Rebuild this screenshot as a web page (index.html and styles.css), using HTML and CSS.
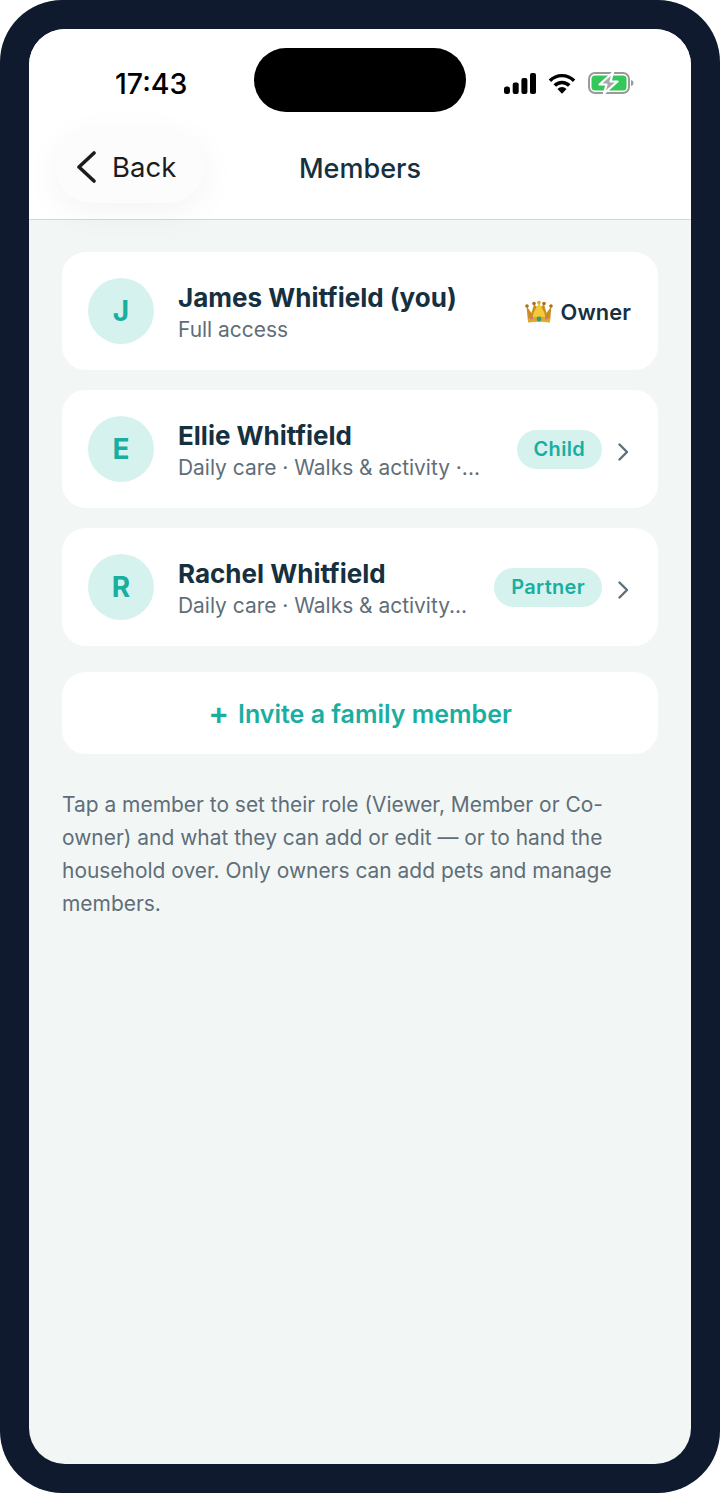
FILE: index.html
```html
<!DOCTYPE html>
<html lang="en">
<head>
    <meta charset="UTF-8">
    <meta name="viewport" content="width=device-width, initial-scale=1.0">
    <title>Members</title>
    <link rel="stylesheet" href="styles.css">
</head>
<body>
    <div class="phone">
        <div class="screen">
            <div class="island"></div>
            <div class="header">
                <div class="status">
                    <span class="time">17:43</span>
                    <div class="status-icons">
                        <svg width="32" height="21" viewBox="0 0 32 21"><g fill="#000"><rect x="0" y="13.5" width="6" height="7.5" rx="2.5"/><rect x="8.700" y="9.500" width="6" height="11.500" rx="2"/><rect x="17.400" y="5" width="6" height="16" rx="2"/><rect x="26" y="0" width="6" height="21" rx="2"/></g></svg>
                        <svg width="28" height="21" viewBox="0 0 29 21"><g fill="none" stroke="#000" stroke-width="3.6"><path d="M2 7.600a17.500 17.500 0 0 1 25 0"/><path d="M7 12.600a10.500 10.500 0 0 1 15 0"/></g><path d="M14.500 21l-4.700-4.900a6.600 6.600 0 0 1 9.400 0z" fill="#000"/></svg>
                        <svg width="46" height="22" viewBox="0 0 46 22"><rect x="1" y="1" width="40" height="20" rx="6" fill="none" stroke="#9a9a9a" stroke-width="2"/><rect x="3.500" y="3.500" width="35" height="15" rx="3.500" fill="#34c759"/><path d="M43 8c1.600.4 2.500 1.500 2.500 3s-.9 2.600-2.500 3z" fill="#9a9a9a"/><path d="M25 0.500L11.500 12.500h7L16 21.500 29.500 9.500h-7z" fill="#a8a8a8" stroke="#fff" stroke-width="2.200" stroke-linejoin="round"/></svg>
                    </div>
                </div>
                <div class="nav">
                    <div class="back">
                        <svg width="22" height="32" viewBox="0 0 22 32"><path d="M19 2L4 16l15 14" fill="none" stroke="#1c1c1e" stroke-width="3.600" stroke-linecap="round" stroke-linejoin="round"/></svg>
                        <span>Back</span>
                    </div>
                    <h1 class="title">Members</h1>
                </div>
            </div>
            <div class="content">
                <div class="member">
                    <div class="avatar">J</div>
                    <div class="info">
                        <div class="name">James Whitfield (you)</div>
                        <div class="sub">Full access</div>
                    </div>
                    <div class="owner">
                        <svg width="28" height="24" viewBox="0 0 28 24">
                            <path d="M1.500 6l5 7 2.500-9 5 5 5-5 2.500 9 5-7-1.500 15.500h-22z" fill="#c98f1e"/>
                            <path d="M14 2.500l5.500 10.500 1.500 8.500H7l1.500-8.500z" fill="#f4c838"/>
                            <path d="M2.800 18.500c7-2.500 15.400-2.500 22.400 0l-.7 4.300c-7-1.600-14-1.600-21 0z" fill="#e0a82a"/>
                            <circle cx="2" cy="6" r="1.800" fill="#a9701a"/><circle cx="9" cy="3.500" r="1.800" fill="#a9701a"/><circle cx="14" cy="2.500" r="1.800" fill="#e0a82a"/><circle cx="19" cy="3.500" r="1.800" fill="#a9701a"/><circle cx="26" cy="6" r="1.800" fill="#a9701a"/>
                            <circle cx="14" cy="19" r="2.400" fill="#2f9e7a"/><circle cx="6.500" cy="18" r="1.600" fill="#d9708a"/><circle cx="21.500" cy="18" r="1.600" fill="#d9708a"/>
                        </svg>
                        <span>Owner</span>
                    </div>
                </div>
                <div class="member">
                    <div class="avatar">E</div>
                    <div class="info">
                        <div class="name">Ellie Whitfield</div>
                        <div class="sub">Daily care · Walks &amp; activity ·...</div>
                    </div>
                    <div class="badge">Child</div>
                    <svg class="chevron" width="11" height="18" viewBox="0 0 11 18"><path d="M1.500 1.500L9 9l-7.500 7.500" fill="none" stroke="#5f6e78" stroke-width="2.400" stroke-linecap="round" stroke-linejoin="round"/></svg>
                </div>
                <div class="member">
                    <div class="avatar">R</div>
                    <div class="info">
                        <div class="name">Rachel Whitfield</div>
                        <div class="sub">Daily care · Walks &amp; activity...</div>
                    </div>
                    <div class="badge">Partner</div>
                    <svg class="chevron" width="11" height="18" viewBox="0 0 11 18"><path d="M1.500 1.500L9 9l-7.500 7.500" fill="none" stroke="#5f6e78" stroke-width="2.400" stroke-linecap="round" stroke-linejoin="round"/></svg>
                </div>
                <div class="invite"><span class="plus">+</span>Invite a family member</div>
                <p class="note">Tap a member to set their role (Viewer, Member or Co-owner) and what they can add or edit — or to hand the household over. Only owners can add pets and manage members.</p>
            </div>
        </div>
    </div>
</body>
</html>
```

FILE: styles.css
```css
* {
    box-sizing: border-box;
}
body {
    margin: 0;
    background-color: #fff;
    font-family: Inter, "Liberation Sans", sans-serif;
}
.phone {
    width: 720px;
    height: 1493px;
    padding: 29px;
    background-color: #0f1a2e;
    border-radius: 62px;
}
.screen {
    position: relative;
    height: 100%;
    display: flex;
    flex-direction: column;
    background-color: #f2f7f6;
    border-radius: 36px;
    overflow: hidden;
}
.island {
    position: absolute;
    top: 19px;
    left: 225px;
    width: 212px;
    height: 64px;
    background-color: #000;
    border-radius: 32px;
}
.header {
    height: 191px;
    flex-shrink: 0;
    background-color: #fff;
    border-bottom: 1px solid #cfdad8;
}
.status {
    height: 102px;
    display: flex;
    justify-content: space-between;
    align-items: center;
    padding: 6px 57px 0 86px;
}
.time {
    font-size: 28.500px;
    font-weight: 500;
    color: #000;
}
.status-icons {
    display: flex;
    align-items: center;
    gap: 12px;
}
.nav {
    position: relative;
    display: flex;
    justify-content: center;
    align-items: center;
    height: 72px;
}
.back {
    position: absolute;
    left: 27px;
    top: 0;
    width: 148px;
    height: 72px;
    display: flex;
    align-items: center;
    gap: 15px;
    padding-left: 19px;
    background-color: #fcfcfc;
    border-radius: 36px;
    box-shadow: 0 8px 36px rgba(15, 26, 46, 0.05);
    font-size: 27.500px;
    color: #1c1c1e;
}
.title {
    margin: 2px 0 0;
    font-size: 27px;
    font-weight: 500;
    color: #16303f;
}
.content {
    padding: 32px 33px;
    display: flex;
    flex-direction: column;
    gap: 20px;
}
.member {
    height: 118px;
    display: flex;
    align-items: center;
    padding: 0 29px 0 26px;
    background-color: #fff;
    border-radius: 24px;
}
.avatar {
    width: 66px;
    height: 66px;
    flex-shrink: 0;
    margin-right: 24px;
    display: flex;
    justify-content: center;
    align-items: center;
    background-color: #d6f2ee;
    border-radius: 50%;
    font-size: 28px;
    font-weight: 700;
    color: #1aaea0;
}
.info {
    flex: 1;
    min-width: 0;
    padding-top: 4px;
}
.name {
    font-size: 26px;
    font-weight: 700;
    line-height: 34px;
    color: #16303f;
}
.sub {
    font-size: 20.950px;
    line-height: 30px;
    color: #5f6e78;
    white-space: nowrap;
}
.owner {
    display: flex;
    align-items: center;
    gap: 8px;
    margin-right: -2px;
    padding-top: 2px;
    font-size: 21.800px;
    font-weight: 600;
    letter-spacing: 0.1px;
    color: #16303f;
}
.badge {
    height: 39px;
    padding: 0 17px;
    display: flex;
    align-items: center;
    background-color: #d6f2ee;
    border-radius: 20px;
    font-size: 20px;
    font-weight: 600;
    letter-spacing: 0.3px;
    color: #1aaea0;
}
.chevron {
    margin: 6px 0 0 16px;
}
.invite {
    height: 82px;
    margin-top: 6px;
    padding-top: 2px;
    display: flex;
    justify-content: center;
    align-items: center;
    background-color: #fff;
    border-radius: 24px;
    font-size: 25px;
    font-weight: 600;
    color: #1aaea0;
}
.plus {
    margin: -4px 9px 0 0;
    font-size: 31px;
    line-height: 1;
    font-weight: 600;
}
.note {
    margin: 14px 0 0;
    font-size: 20.950px;
    line-height: 33px;
    color: #5f6e78;
}
```
